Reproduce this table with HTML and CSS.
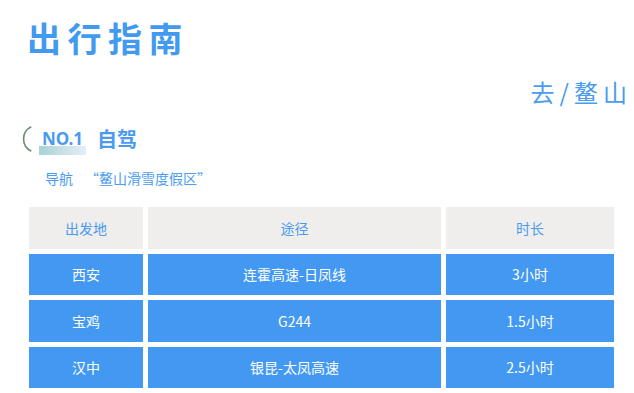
FILE: index.html
```html
<!DOCTYPE html>
<html lang="zh-CN">
<head>
<meta charset="utf-8">
<title>出行指南</title>
<link rel="stylesheet" href="styles.css">
</head>
<body>
<div class="page">
  <h1 class="title">出行指南</h1>
  <div class="dest">去/鳌山</div>
  <div class="section">
    <span class="badge">
      <svg class="arc" width="24" height="34" viewBox="0 0 24 34"><path d="M9.3 5.8 A13.5 13.5 0 0 0 9.3 30.2" fill="none" stroke="#6b8f73" stroke-width="1.6"/></svg>
      <span class="bar"></span>
      <span class="no">NO.1</span>
    </span>
    <span class="sec-title">自驾</span>
  </div>
  <div class="nav"><span class="nav-label">导航</span><span class="nav-value">“鳌山滑雪度假区”</span></div>
  <div class="grid">
    <div class="cell head">出发地</div>
    <div class="cell head">途径</div>
    <div class="cell head">时长</div>
    <div class="cell">西安</div>
    <div class="cell">连霍高速-日凤线</div>
    <div class="cell">3小时</div>
    <div class="cell">宝鸡</div>
    <div class="cell">G244</div>
    <div class="cell">1.5小时</div>
    <div class="cell">汉中</div>
    <div class="cell">银昆-太凤高速</div>
    <div class="cell">2.5小时</div>
  </div>
</div>
</body>
</html>
```

FILE: styles.css
```css
html, body {
  margin: 0;
  padding: 0;
  background: #ffffff;
}
body {
  font-family: "Noto Sans CJK SC", "Noto Sans", sans-serif;
  width: 634px;
  height: 393px;
  overflow: hidden;
}
.page {
  display: flex;
  flex-direction: column;
}
.title {
  margin: 18px 0 0 0;
  padding-left: 27px;
  font-size: 34px;
  line-height: 40px;
  height: 40px;
  font-weight: 700;
  letter-spacing: 6.5px;
  color: #4299f0;
}
.dest {
  margin-top: 19px;
  height: 30px;
  line-height: 30px;
  text-align: right;
  padding-right: 2px;
  font-size: 24px;
  letter-spacing: 5px;
  color: #4a9cf0;
}
.section {
  margin-top: 17px;
  height: 30px;
  display: flex;
  align-items: center;
  padding-left: 24px;
}
.badge {
  position: relative;
  display: inline-block;
  width: 62px;
  height: 30px;
}
.arc {
  position: absolute;
  left: -2px;
  top: -3px;
}
.bar {
  position: absolute;
  left: 15px;
  top: 22px;
  width: 47px;
  height: 9px;
  background: linear-gradient(90deg, #a6d2d6 0%, #c8e0e6 50%, #e4eef6 100%);
}
.no {
  position: absolute;
  left: 18px;
  top: 0;
  line-height: 30px;
  font-family: "Noto Sans", sans-serif;
  font-size: 17px;
  font-weight: 700;
  color: #4a9af0;
}
.sec-title {
  margin-left: 11px;
  font-size: 20px;
  line-height: 30px;
  font-weight: 700;
  color: #4a9af0;
}
.nav {
  margin-top: 14px;
  height: 20px;
  line-height: 20px;
  padding-left: 45px;
  font-size: 14px;
  color: #4a9cf0;
  display: flex;
}
.nav-value {
  margin-left: 12px;
}
.grid {
  margin-top: 19px;
  margin-left: 29px;
  display: grid;
  grid-template-columns: 114px 293px 168px;
  grid-auto-rows: 41.5px;
  gap: 5px;
}
.cell {
  background: #4399f1;
  color: #ffffff;
  font-size: 14px;
  display: flex;
  align-items: center;
  justify-content: center;
}
.cell.head {
  background: #efeeec;
  color: #4a9af0;
}
```
